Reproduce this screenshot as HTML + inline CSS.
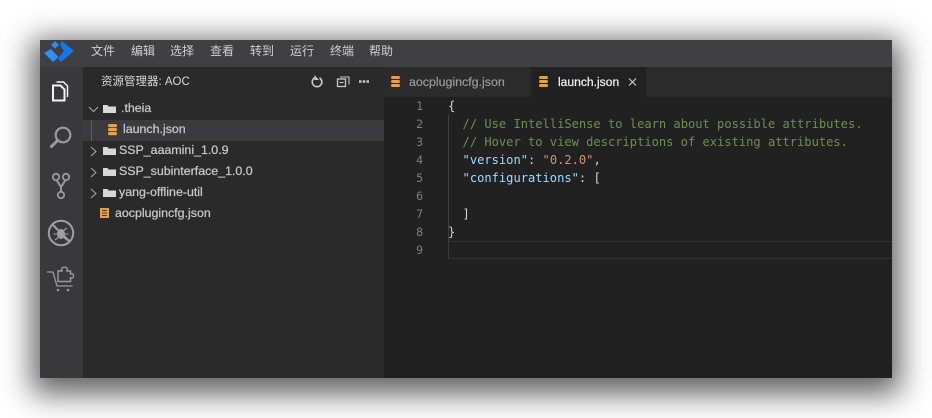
<!DOCTYPE html>
<html><head><meta charset="utf-8">
<style>
html,body{margin:0;padding:0;width:932px;height:418px;overflow:hidden;background:#fff}
body{position:relative;font-family:"Liberation Sans","Noto Sans CJK SC",sans-serif}
.win{position:absolute;left:40px;top:40px;width:852px;height:338px;background:#212122;box-shadow:0 8px 28px 8px rgba(0,0,0,.62);overflow:hidden;filter:blur(.3px)}
.abs{position:absolute;white-space:nowrap}
.menu{top:3px;font-size:12px;line-height:16px;color:#d0d0d0}
.tree{font-size:12.4px;line-height:16px;color:#c8c8c8;-webkit-text-stroke:.25px #c8c8c8}
.ln{font:11.5px/18px "DejaVu Sans Mono",monospace;color:#7e7e7e;width:20px;text-align:right;left:363px}
.code{font:12.08px/18px "DejaVu Sans Mono",monospace;color:#d4d4d4;left:408px;white-space:pre}
.cm{color:#6a9050}.k{color:#9cdcfe}.s{color:#ce9178}
svg{position:absolute;overflow:visible}
</style></head><body>
<div class="win">
 <div class="abs" style="left:0;top:0;width:852px;height:27px;background:#3f3f44"></div>
 <div class="abs" style="left:0;top:27px;width:43px;height:311px;background:#39383b"></div>
 <div class="abs" style="left:43px;top:27px;width:301px;height:311px;background:#2a2a2b"></div>
 <div class="abs" style="left:344px;top:27px;width:508px;height:30px;background:#2b2b2c"></div>
 <div class="abs" style="left:491px;top:27px;width:115px;height:30px;background:#212122"></div>

 <svg style="left:0;top:0" width="43" height="27" viewBox="0 0 43 27">
  <path d="M15 1 19 5 15 8.500 11 5Z" fill="#2d8cf0"/>
  <path d="M11 9 18.500 17 13 22 4 13Z" fill="#2f8ff2"/>
  <path d="M22 1 34 11 21 22 18 18.500 24 11 20 5Z" fill="#1677e8"/>
 </svg>
 <div class="abs menu" style="left:51px">文件</div>
 <div class="abs menu" style="left:91px">编辑</div>
 <div class="abs menu" style="left:130px">选择</div>
 <div class="abs menu" style="left:170px">查看</div>
 <div class="abs menu" style="left:210px">转到</div>
 <div class="abs menu" style="left:250px">运行</div>
 <div class="abs menu" style="left:290px">终端</div>
 <div class="abs menu" style="left:329px">帮助</div>

 <svg style="left:0;top:0" width="43" height="267" viewBox="0 0 43 267" fill="none">
  <path d="M13 45.500h7.500l4 4V60.500H13Z" stroke="#f4f4f4" stroke-width="2"/>
  <path d="M16.500 42h7l4 4V57" stroke="#f0f0f0" stroke-width="1.500"/>
  <circle cx="23" cy="95" r="7.300" stroke="#9b9b9b" stroke-width="2.200"/>
  <path d="M17.500 100.500 10.500 107.500" stroke="#9b9b9b" stroke-width="3"/>
  <circle cx="16" cy="137" r="3.200" stroke="#9b9b9b" stroke-width="1.800"/>
  <circle cx="26" cy="137" r="3.200" stroke="#9b9b9b" stroke-width="1.800"/>
  <circle cx="21" cy="155" r="3.200" stroke="#9b9b9b" stroke-width="1.800"/>
  <path d="M16.500 140 21 147 25.500 140M21 147V152" stroke="#9b9b9b" stroke-width="2"/>
  <circle cx="21" cy="193" r="12.200" stroke="#a0a0a0" stroke-width="2"/>
  <path d="M12.500 184.500 29.500 201.500" stroke="#a0a0a0" stroke-width="2"/>
  <ellipse cx="21" cy="194" rx="4" ry="5" fill="#a0a0a0"/>
  <path d="M15 188l4 3M27 188l-4 3M13.500 194h4M28.500 194h-4M15 200l4-3M27 200l-4-3" stroke="#a0a0a0" stroke-width="1.100"/>
  <path d="M7 232h6l4 14h15.500" stroke="#9b9b9b" stroke-width="1.300"/>
  <path d="M18 231h4c-1-2.500.3-3.800 2.500-3.800s3.500 1.300 2.500 3.800h3.500v3c2.200-.8 3-.2 3 1.700s-.8 2.800-3 2v3.800H18Z" stroke="#9b9b9b" stroke-width="1.400"/>
  <circle cx="18" cy="250" r="1.300" fill="#9b9b9b"/><circle cx="28" cy="250" r="1.300" fill="#9b9b9b"/>
 </svg>

 <div class="abs" style="left:61px;top:35px;font-size:11.5px;line-height:14px;color:#d8d8d8">资源管理器: AOC</div>
 <svg style="left:268px;top:34px" width="60" height="16" fill="none">
  <path d="M11.500 3.800A4.800 4.800 0 1 1 7 3.600" stroke="#c8c8c8" stroke-width="1.600"/>
  <path d="M6.500 1V6H11Z" fill="#c8c8c8"/>
  <rect x="29.500" y="5" width="8" height="7.500" stroke="#c8c8c8" stroke-width="1.300"/>
  <path d="M32 3h9v7.500M31.500 8.500h4" stroke="#c8c8c8" stroke-width="1.100"/>
  <path d="M51 7.500h10" stroke="#c8c8c8" stroke-width="2.400" stroke-dasharray="2.500 1.250"/>
 </svg>

 <div class="abs" style="left:43px;top:80px;width:301px;height:21px;background:#3b3b3f"></div>
 <div class="abs" style="left:51px;top:80px;width:1px;height:21px;background:#5e5e60"></div>
 <svg style="left:43px;top:60px" width="130" height="170" fill="none">
  <path d="M6 7 10.500 11.500 15 7" stroke="#aaa" stroke-width="1"/>
  <path d="M8 47 13 51.500 8 56M8 68 13 72.500 8 77M8 89 13 93.500 8 98" stroke="#aaa" stroke-width="1"/>
  <path d="M20 5h4.500l1 1.500H33v6.500H20Z M20 47h4.500l1 1.500H33v6.500H20Z M20 68h4.500l1 1.500H33v6.500H20Z M20 89h4.500l1 1.500H33v6.500H20Z" fill="#d8d8d8"/>
  <g fill="#e0a050"><rect x="25" y="24" width="9" height="3.200" rx="1.500"/><rect x="25" y="28" width="9" height="3.200" rx="1.500"/><rect x="25" y="32" width="9" height="3.200" rx="1.500"/></g>
  <rect x="17" y="108" width="9" height="10" fill="#e0a050"/>
  <path d="M19 110.500h5M19 113h5M19 115.500h5" stroke="#5a4020" stroke-width="1"/>
 </svg>
 <div class="abs tree" style="left:81px;top:60px">.theia</div>
 <div class="abs tree" style="left:83px;top:81px">launch.json</div>
 <div class="abs tree" style="left:79px;top:102px">SSP_aaamini_1.0.9</div>
 <div class="abs tree" style="left:79px;top:123px">SSP_subinterface_1.0.0</div>
 <div class="abs tree" style="left:79px;top:144px">yang-offline-util</div>
 <div class="abs tree" style="left:75px;top:165px">aocplugincfg.json</div>

 <svg style="left:351px;top:35px" width="170" height="16">
  <g fill="#e0a050"><rect x="0" y="1" width="9" height="3" rx="1.500"/><rect x="0" y="5" width="9" height="3" rx="1.500"/><rect x="0" y="9" width="9" height="3" rx="1.500"/>
  <rect x="148" y="1" width="9" height="3" rx="1.500"/><rect x="148" y="5" width="9" height="3" rx="1.500"/><rect x="148" y="9" width="9" height="3" rx="1.500"/></g>
 </svg>
 <div class="abs" style="left:369px;top:34px;font-size:12.4px;line-height:16px;color:#9a9a9a;-webkit-text-stroke:.2px #9a9a9a">aocplugincfg.json</div>
 <div class="abs" style="left:518px;top:34px;font-size:12.1px;line-height:16px;color:#f0f0f0;-webkit-text-stroke:.25px #f0f0f0">launch.json</div>
 <svg style="left:588px;top:37px" width="10" height="10" fill="none"><path d="M1 1.500 8 8.500M8 1.500 1 8.500" stroke="#d0d0d0" stroke-width="1.100"/></svg>

 <div class="abs" style="left:408px;top:201px;width:444px;height:18px;box-sizing:border-box;border-top:1px solid #333334;border-bottom:1px solid #333334"></div>
 <div class="abs" style="left:408px;top:75px;width:1px;height:126px;background:#404042"></div>
 <div class="abs" style="left:408px;top:201px;width:1px;height:18px;background:#3a3a3c"></div>

 <div class="abs ln" style="top:57px">1</div><div class="abs ln" style="top:75px">2</div><div class="abs ln" style="top:93px">3</div><div class="abs ln" style="top:111px">4</div><div class="abs ln" style="top:129px">5</div><div class="abs ln" style="top:147px">6</div><div class="abs ln" style="top:165px">7</div><div class="abs ln" style="top:183px">8</div><div class="abs ln" style="top:201px">9</div>

 <div class="abs code" style="top:57px">{</div>
 <div class="abs code cm" style="top:75px">  // Use IntelliSense to learn about possible attributes.</div>
 <div class="abs code cm" style="top:93px">  // Hover to view descriptions of existing attributes.</div>
 <div class="abs code" style="top:111px">  <span class="k">"version"</span>: <span class="s">"0.2.0"</span>,</div>
 <div class="abs code" style="top:129px">  <span class="k">"configurations"</span>: [</div>
 <div class="abs code" style="top:165px">  ]</div>
 <div class="abs code" style="top:183px">}</div>
</div>
</body></html>
